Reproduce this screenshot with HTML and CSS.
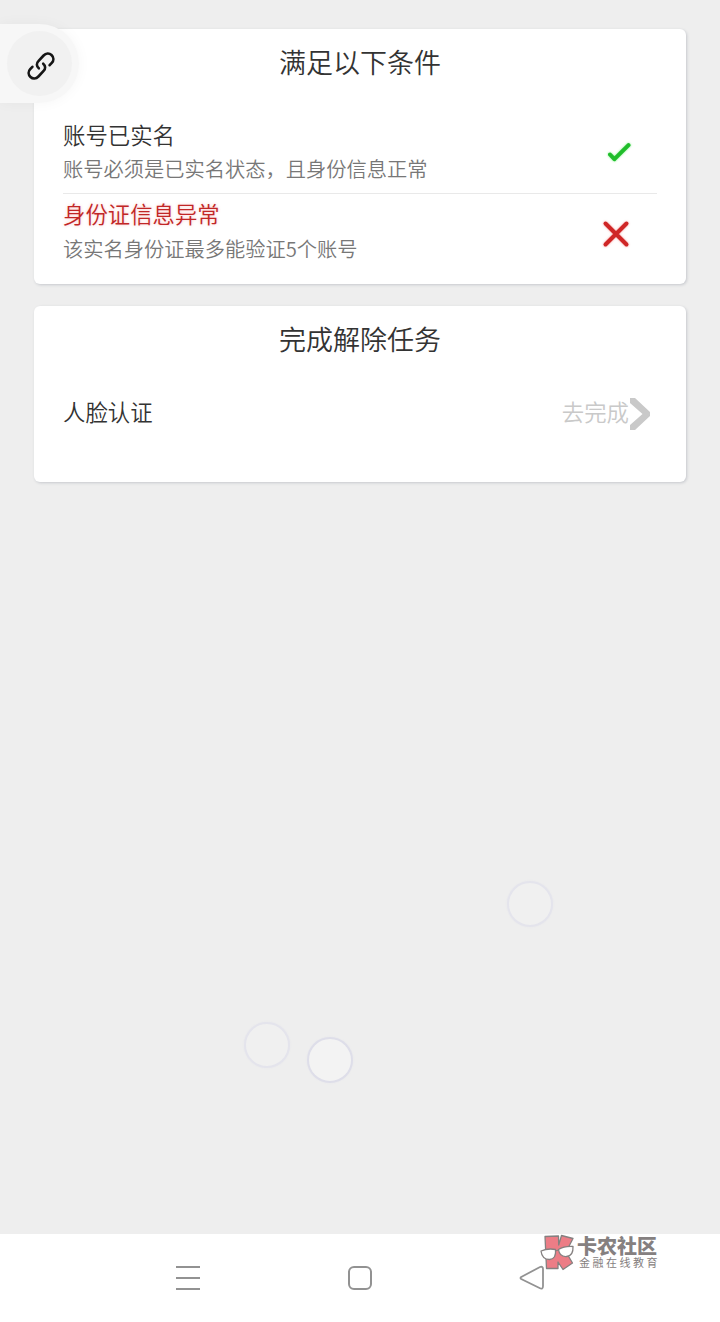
FILE: index.html
```
<!DOCTYPE html>
<html lang="zh-CN">
   <head>
      <meta charset="utf-8">
      <title>满足以下条件</title>
      <link rel="stylesheet" href="styles.css">
   </head>

   <body>

      <section id="wrapper">

         <article class="card">
            <h1>满足以下条件</h1>
            <ul class="conditions">
               <li>
                  <div>
                     <h2>账号已实名</h2>
                     <p>账号必须是已实名状态，且身份信息正常</p>
                  </div>
                  <svg class="mark pass" width="28" height="26" viewBox="0 0 28 26">
                     <path d="M5 14.5L9.4 19.2L23.5 5.2" fill="none" stroke="#20bd2b" stroke-width="4" stroke-linecap="round" stroke-linejoin="round"/>
                  </svg>
               </li>
               <li>
                  <div>
                     <h2 class="fail">身份证信息异常</h2>
                     <p>该实名身份证最多能验证5个账号</p>
                  </div>
                  <svg class="mark cross" width="30" height="30" viewBox="0 0 30 30">
                     <path d="M4.5 4.5L25.5 25.5M25.5 4.5L4.5 25.5" fill="none" stroke="#cf2626" stroke-width="4" stroke-linecap="round"/>
                  </svg>
               </li>
            </ul>
         </article>

         <article class="card tasks">
            <h1>完成解除任务</h1>
            <div class="task">
               <h2>人脸认证</h2>
               <a class="todo"><span>去完成</span><svg width="22" height="34" viewBox="0 0 22 34"><path d="M1 1H6L21 15V19L6 33H1V28L13.5 17L1 6Z" fill="#c9c9c9"/></svg></a>
            </div>
         </article>

      </section>

      <footer class="nav">
         <svg width="26" height="26" viewBox="0 0 26 26"><path d="M1 2H25M1 13H25M1 24H25" stroke="#929292" stroke-width="2"/></svg>
         <svg width="26" height="26" viewBox="0 0 26 26"><rect x="2" y="2" width="22" height="22" rx="5" fill="none" stroke="#929292" stroke-width="2"/></svg>
         <svg width="26" height="26" viewBox="0 0 26 26"><path d="M2.2 12L21 2Q24 1 24 4V21Q24 25 20.5 23L2.2 14Q.8 13 2.2 12Z" fill="none" stroke="#929292" stroke-width="1.8"/></svg>
      </footer>

      <!-- floating link button -->
      <div class="float">
         <div class="float-inner">
            <svg width="30" height="30" viewBox="0 0 30 30" fill="none" stroke="#151515" stroke-width="2.6" stroke-linecap="round" stroke-linejoin="round">
               <path d="M12.8 17.3C10.3 15.1 10.3 12.2 12.4 10.1L17.6 4.5C20 1.9 23.3 1.9 25.5 4C28 6.4 27.9 9.6 25.8 11.8L23.6 14.2"/>
               <path d="M17.2 12.7C19.7 14.9 19.7 17.8 17.6 19.9L12.4 25.5C10 28.1 6.7 28.1 4.5 26C2 23.6 2.1 20.4 4.2 18.2L6.4 15.8"/>
            </svg>
         </div>
      </div>

      <i class="bubble b1"></i>
      <i class="bubble b2"></i>
      <i class="bubble b3"></i>

      <div class="watermark">
         <svg width="36" height="38" viewBox="0 0 36 38" stroke="#858080" stroke-width="1.3" stroke-linejoin="round">
            <path d="M5 2.5L18.5 2L18.7 11L21.5 1.5L33 4.5L26 18L32.5 29L23 35.5L18 28V34.5H6.5Z" fill="#ec7d86"/>
            <path d="M1 17Q8 14 15.5 15.5Q16.5 25 9.5 25.5Q2 25.5 1 17Z" fill="#fff"/>
            <path d="M18.5 15.5Q24 12 33 12.5Q33.5 22 26.5 22.5Q19.5 23 18.5 15.5ZM15.5 17L18.5 16" fill="#fff"/>
         </svg>
         <div>
            <b>卡农社区</b>
            <span>金融在线教育</span>
         </div>
      </div>

   </body>
</html>
```

FILE: styles.css
```
body {
   position: relative;
   display: flex;
   flex-direction: column;
   height: 1322px;
   margin: 0;
   overflow: hidden;
   background: #eee;
   font-family: "Noto Sans CJK SC", "Noto Sans", sans-serif;
   font-weight: 350;
   color: #333;
}

h1, h2, p, ul {
   margin: 0;
   padding: 0;
   font-weight: 350;
}

svg {
   display: block;
}

#wrapper {
   flex: 1;
   display: flex;
   flex-direction: column;
   gap: 22px;
   padding: 29px 34px 0;
}

.card {
   box-sizing: border-box;
   height: 255px;
   padding: 13px 29px 0;
   background: #fff;
   border-radius: 6px;
   box-shadow: 1px 1px 3px rgba(60, 70, 90, .22);
}

.tasks { height: 176px; }

h1 {
   font-size: 27px;
   line-height: 40px;
   text-align: center;
}

h2 {
   font-size: 22.4px;
   line-height: 34px;
}

h2.fail {
   color: #c12626;
   text-shadow: 0 0 3px rgba(240, 80, 80, .35);
}

.conditions {
   margin-top: 33px;
   list-style: none;
}

.conditions li {
   display: flex;
   justify-content: space-between;
   align-items: center;
   height: 78px;
}

.conditions li > div {
   padding-bottom: 6px;
}

.conditions li + li {
   height: 79px;
   border-top: 1px solid #e9e9e9;
}

.conditions p {
   color: #777;
   font-size: 20.25px;
   line-height: 35px;
}

.conditions li + li p {
   line-height: 37px;
}

.conditions li + li > div {
   padding-bottom: 4px;
}

.mark { margin: 0 24px 3px 0; }
.pass { filter: drop-shadow(0 0 1px rgba(40, 230, 50, .6)); }
.cross { margin: 0 26px 0 0; filter: drop-shadow(0 0 1px rgba(240, 50, 50, .5)); }

.task {
   display: flex;
   justify-content: space-between;
   align-items: center;
   margin-top: 35px;
   height: 40px;
}

.task h2, .todo span {
   padding-bottom: 6px;
}

.todo {
   display: flex;
   align-items: center;
   margin-right: 6px;
   color: #c9c9c9;
   font-size: 22.4px;
   line-height: 34px;
}

.nav {
   display: flex;
   justify-content: center;
   gap: 146px;
   height: 57px;
   padding-top: 31px;
   background: #fff;
}

.float {
   position: absolute;
   top: 24px;
   left: 0;
   box-sizing: border-box;
   width: 79px;
   height: 79px;
   padding: 7px;
   background: #f7f7f7;
   border-radius: 0 40px 40px 0;
   box-shadow: 0 0 14px rgba(0, 0, 0, .04);
}

.float-inner {
   display: flex;
   justify-content: center;
   align-items: center;
   width: 65px;
   height: 65px;
   padding-left: 3px;
   padding-top: 4px;
   box-sizing: border-box;
   border-radius: 50%;
   background: #f1f1f1;
}

.bubble {
   position: absolute;
   box-sizing: border-box;
   width: 46px;
   height: 46px;
   border: 2px solid #e4e4ec;
   border-radius: 50%;
   background: #f0f0f0;
   box-shadow: 0 0 2px #e5e5eb;
}

.b1 { left: 507px; top: 881px; }
.b2 { left: 244px; top: 1022px; }
.b3 { left: 307px; top: 1037px; background: #f3f3f3; border-color: #dedee9; }

.watermark {
   position: absolute;
   left: 540px;
   top: 1234px;
   display: flex;
   gap: 1px;
   color: #858080;
}

.watermark b {
   display: block;
   font-size: 20px;
   font-weight: 900;
   line-height: 23px;
}

.watermark span {
   display: block;
   padding-left: 2px;
   font-size: 11px;
   font-weight: 400;
   letter-spacing: 2.5px;
   line-height: 11px;
}
```
